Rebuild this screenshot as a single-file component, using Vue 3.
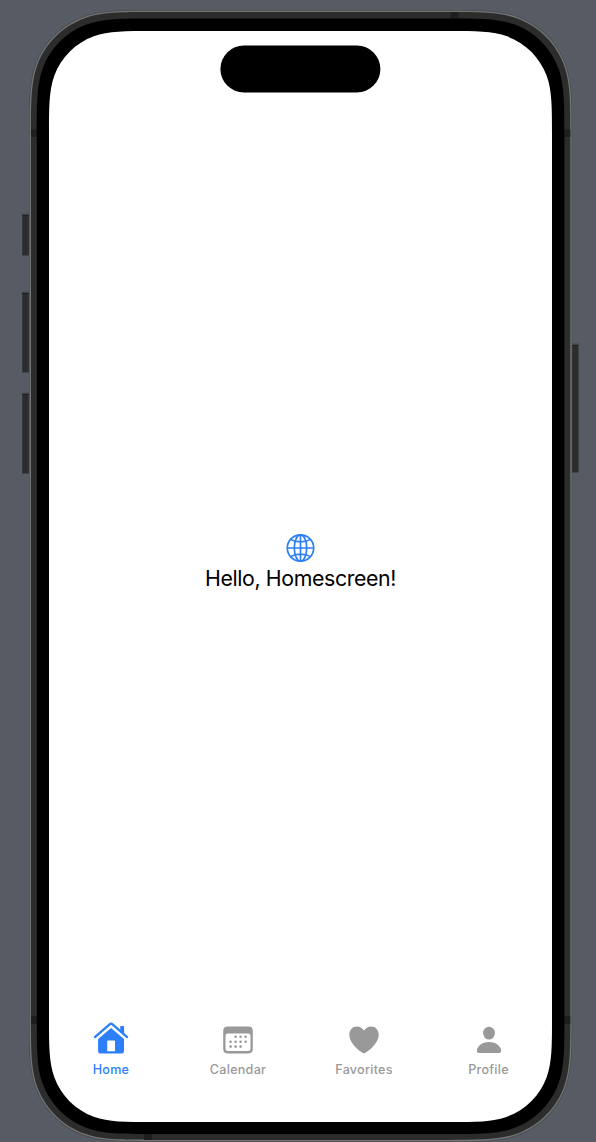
<script setup>
// Rounded rectangle with continuous-curvature corners.
function squircle(x, y, w, h, r) {
  const a = 1.45 * r, b = 1.08 * r, c = 0.8373 * r
  const d = 0.63149 * r, e = 0.07491 * r, f = 0.37282 * r, g = 0.16906 * r
  const X = x + w, Y = y + h
  return [
    `M${x + a} ${y}H${X - a}`,
    `C${X - b} ${y} ${X - c} ${y} ${X - d} ${y + e}`,
    `C${X - f} ${y + g} ${X - g} ${y + f} ${X - e} ${y + d}`,
    `C${X} ${y + c} ${X} ${y + b} ${X} ${y + a}`,
    `V${Y - a}`,
    `C${X} ${Y - b} ${X} ${Y - c} ${X - e} ${Y - d}`,
    `C${X - g} ${Y - f} ${X - f} ${Y - g} ${X - d} ${Y - e}`,
    `C${X - c} ${Y} ${X - b} ${Y} ${X - a} ${Y}`,
    `H${x + a}`,
    `C${x + b} ${Y} ${x + c} ${Y} ${x + d} ${Y - e}`,
    `C${x + f} ${Y - g} ${x + g} ${Y - f} ${x + e} ${Y - d}`,
    `C${x} ${Y - c} ${x} ${Y - b} ${x} ${Y - a}`,
    `V${y + a}`,
    `C${x} ${y + b} ${x} ${y + c} ${x + e} ${y + d}`,
    `C${x + g} ${y + f} ${x + f} ${y + g} ${x + d} ${y + e}`,
    `C${x + c} ${y} ${x + b} ${y} ${x + a} ${y}Z`
  ].join('')
}

const shell = [
  { d: squircle(29, 10, 543.3, 1132, 86), fill: '#484b4f' },
  { d: squircle(29.7, 10.8, 541.9, 1130.4, 85.3), fill: '#747475' },
  { d: squircle(31, 12.1, 539.3, 1127.8, 84), fill: '#2c2c2c' }
]
const bezel = squircle(36.8, 18.4, 527.6, 1115.6, 79.5)
const screen = squircle(49, 31, 503, 1091, 71)

const buttons = [
  { x: 22, y: 215, h: 40 },
  { x: 22, y: 293, h: 79 },
  { x: 22, y: 394, h: 79 },
  { x: 571.6, y: 345, h: 127 }
]
const bands = [
  { x: 31, y: 129.5, w: 6, h: 7.5 },
  { x: 564.3, y: 129.5, w: 6, h: 7.5 },
  { x: 31, y: 1016, w: 6, h: 8 },
  { x: 564.3, y: 1016, w: 6, h: 8 },
  { x: 450.5, y: 12.3, w: 8, h: 6.2 },
  { x: 144, y: 1134, w: 8, h: 6 }
]

const dots = [
  [15.8, 10.8], [20.8, 10.8], [25.8, 10.8],
  [10.8, 15.8], [15.8, 15.8], [20.8, 15.8], [25.8, 15.8],
  [10.8, 20.6], [15.8, 20.6], [20.8, 20.6]
]
</script>

<template>
  <main class="stage">
    <svg class="device" width="596" height="1142" viewBox="0 0 596 1142" aria-hidden="true">
      <g v-for="b in buttons" :key="b.y">
        <rect :x="b.x" :y="b.y - 1.5" width="6.9" :height="b.h + 2.5" fill="#42454a" />
        <rect :x="b.x + 0.4" :y="b.y" width="6.3" :height="b.h" fill="#2c2c2c" />
        <rect :x="b.x + 0.4" :y="b.y" width="6.3" height="1" fill="#1f1f1f" />
      </g>
      <path v-for="s in shell" :key="s.fill" :d="s.d" :fill="s.fill" />
      <rect v-for="(b, i) in bands" :key="i" :x="b.x" :y="b.y" :width="b.w" :height="b.h" fill="#1e1e1e" />
      <path :d="bezel" fill="#000" />
      <path :d="screen" fill="#fff" />
    </svg>

    <section class="screen">
      <header class="status">
        <svg width="161" height="48" viewBox="0 0 161 48" aria-hidden="true">
          <rect x="0.4" y="0.5" width="160" height="47" rx="23.5" fill="#000" />
        </svg>
      </header>

      <div class="content">
        <svg class="globe" width="29" height="29" viewBox="0 0 29 29" fill="none" stroke="#2d7ff9" stroke-width="1.7">
          <circle cx="14.5" cy="14" r="13.2" />
          <ellipse cx="14.5" cy="14" rx="6.2" ry="13.2" />
          <path d="M14.5 0.8V27.2M1.3 14H27.7M4.6 5.4Q8.5 7.9 14.5 7.9T24.4 5.4M4.6 22.6Q8.5 20.1 14.5 20.1T24.4 22.6" />
        </svg>
        <p class="greeting">Hello, Homescreen!</p>
      </div>

      <nav class="tabs">
        <a class="tab active">
          <svg width="36" height="34" viewBox="0 0 36 34">
            <path d="M1.9 16.1L16.9 3.2Q18.1 2.2 19.3 3.2L34.1 16.1" fill="none" stroke="currentColor" stroke-width="2.3" stroke-linecap="round" />
            <path d="M27.2 5.8Q27.2 5 28 5H30.3Q31.1 5 31.1 5.8V13.2L27.2 9.8Z" fill="currentColor" />
            <path fill-rule="evenodd" d="M18.1 7L31 18V29.7Q31 32.6 28.1 32.6H8Q5.1 32.6 5.1 29.7V18ZM14.8 19.4Q14.2 19.4 14.2 20V30.2H22V20Q22 19.4 21.4 19.4Z" fill="currentColor" />
          </svg>
          <span>Home</span>
        </a>
        <a class="tab">
          <svg width="36" height="34" viewBox="0 0 36 34">
            <path fill-rule="evenodd" d="M7.6 5.4H28.4Q32.8 5.4 32.8 9.8V28Q32.8 32.4 28.4 32.4H7.6Q3.2 32.4 3.2 28V9.8Q3.2 5.4 7.6 5.4ZM7.7 12.4Q5.5 12.4 5.5 14.6V27.8Q5.5 30.1 7.8 30.1H28.2Q30.5 30.1 30.5 27.8V14.6Q30.5 12.4 28.3 12.4Z" fill="currentColor" />
            <circle v-for="(p, i) in dots" :key="i" :cx="p[0] - 0.2" :cy="p[1] + 5" r="1.3" fill="currentColor" />
          </svg>
          <span>Calendar</span>
        </a>
        <a class="tab">
          <svg width="36" height="34" viewBox="0 0 36 34">
            <path d="M18 32.4C16.5 32.4 3.3 23.5 3.3 13.8C3.3 8.8 6.6 5.4 10.9 5.4C14.1 5.4 16.5 7 18 9.6C19.5 7 21.9 5.4 25.1 5.4C29.4 5.4 32.7 8.8 32.7 13.8C32.7 23.5 19.5 32.4 18 32.4Z" fill="currentColor" />
          </svg>
          <span>Favorites</span>
        </a>
        <a class="tab">
          <svg width="36" height="34" viewBox="0 0 36 34">
            <ellipse cx="18" cy="12.1" rx="5.9" ry="6.4" fill="currentColor" />
            <path d="M8 32Q5.8 32 5.8 29.8C5.8 26.2 10.3 21 18 21S30.2 26.2 30.2 29.8Q30.2 32 28 32Z" fill="currentColor" />
          </svg>
          <span>Profile</span>
        </a>
      </nav>
    </section>
  </main>
</template>

<style>
body {
  margin: 0;
  background: #575c64;
}
</style>

<style scoped>
.stage {
  position: relative;
  box-sizing: border-box;
  width: 596px;
  height: 1142px;
  padding: 31px 44px 20px 49px;
  background: #575c64;
  overflow: hidden;
  font-family: Inter, "Liberation Sans", sans-serif;
}
.device {
  position: absolute;
  inset: 0;
}
.screen {
  position: relative;
  display: flex;
  flex-direction: column;
  width: 503px;
  height: 1091px;
}
.status {
  display: flex;
  justify-content: center;
  height: 48px;
  padding-top: 14px;
}
.status svg {
  display: block;
  margin-right: 1px;
}
.content {
  flex: 1;
  display: flex;
  flex-direction: column;
  align-items: center;
  padding-top: 441px;
}
.globe {
  display: block;
}
.greeting {
  margin: 1px 0 0;
  font-size: 21.3px;
  line-height: 28px;
  letter-spacing: -0.37px;
  color: #000;
  white-space: nowrap;
}
.tabs {
  display: grid;
  grid-template-columns: 124px 130px 122px 127px;
  height: 101px;
}
.tab {
  display: flex;
  flex-direction: column;
  align-items: center;
  color: #999;
  font-size: 12.6px;
  font-weight: 500;
  letter-spacing: 0.25px;
  line-height: 16px;
}
.tab span {
  margin-top: 7px;
}
.tab.active {
  color: #2d7ff9;
}
</style>
